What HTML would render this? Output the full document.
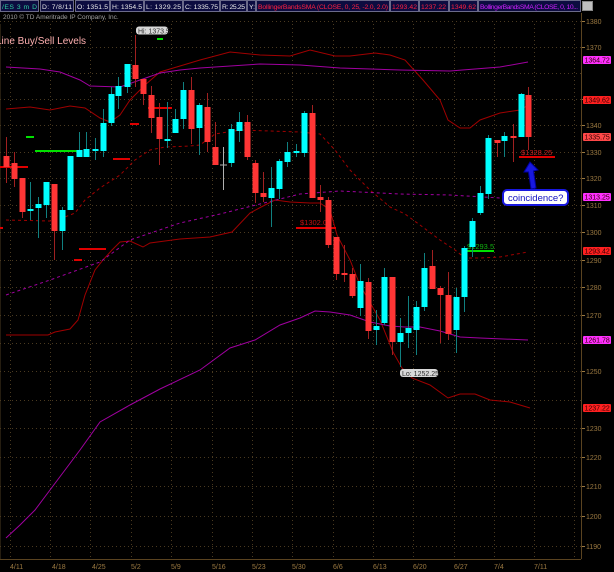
<!DOCTYPE html>
<html><head><meta charset="utf-8"><style>
html,body{margin:0;padding:0;background:#000;width:614px;height:572px;overflow:hidden}
svg{display:block}
text{font-family:"Liberation Sans",sans-serif}
#c rect{stroke:none}
</style></head><body>
<svg width="614" height="572" viewBox="0 0 614 572" xmlns="http://www.w3.org/2000/svg">
<rect width="614" height="572" fill="#000"/>
<!-- header -->
<g font-size="6.8" fill="#e8e8e8">
<rect x="0.5" y="0.5" width="38" height="11" fill="#0c0c40" stroke="#6a6a8a"/><text x="2" y="9" fill="#30d0a0" textLength="35">/ES 3 m D</text>
<rect x="40.5" y="0.5" width="33" height="11" fill="#0c0c40" stroke="#6a6a8a"/><text x="42" y="9" textLength="30">D: 7/8/11</text>
<rect x="75.5" y="0.5" width="34" height="11" fill="#0c0c40" stroke="#6a6a8a"/><text x="77" y="9" textLength="31">O: 1351.5</text>
<rect x="110.5" y="0.5" width="33" height="11" fill="#0c0c40" stroke="#6a6a8a"/><text x="112" y="9" textLength="30">H: 1354.5</text>
<rect x="144.5" y="0.5" width="38" height="11" fill="#0c0c40" stroke="#6a6a8a"/><text x="146" y="9" textLength="35">L: 1329.25</text>
<rect x="183.5" y="0.5" width="36" height="11" fill="#0c0c40" stroke="#6a6a8a"/><text x="185" y="9" textLength="33">C: 1335.75</text>
<rect x="220.5" y="0.5" width="26" height="11" fill="#0c0c40" stroke="#6a6a8a"/><text x="222" y="9" textLength="23">R: 25.25</text>
<rect x="247.5" y="0.5" width="8" height="11" fill="#0c0c40" stroke="#6a6a8a"/><text x="249" y="9">Y:</text>
<rect x="256.5" y="0.5" width="133" height="11" fill="#0c0c40" stroke="#6a6a8a"/><text x="258" y="9" fill="#ff2040" textLength="130">BollingerBandsSMA (CLOSE, 0, 25, -2.0, 2.0)</text>
<rect x="390.5" y="0.5" width="28" height="11" fill="#0c0c40" stroke="#6a6a8a"/><text x="392" y="9" fill="#ff2040" textLength="25">1293.42</text>
<rect x="419.5" y="0.5" width="29" height="11" fill="#0c0c40" stroke="#6a6a8a"/><text x="421" y="9" fill="#ff2040" textLength="25">1237.22</text>
<rect x="449.5" y="0.5" width="28" height="11" fill="#0c0c40" stroke="#6a6a8a"/><text x="451" y="9" fill="#ff2040" textLength="25">1349.62</text>
<rect x="478.5" y="0.5" width="102" height="11" fill="#0c0c40" stroke="#6a6a8a"/><text x="480" y="9" fill="#d020ff" textLength="98">BollingerBandsSMA (CLOSE, 0, 10...</text>
<rect x="582.5" y="1.5" width="10" height="9" fill="#c0c0c0" stroke="#888"/>
</g>
<text x="3" y="19" font-size="6.5" fill="#a0a0a0">2010 © TD Ameritrade IP Company, Inc.</text>
<!-- grid -->
<g stroke="#4a3a20" stroke-width="1" stroke-dasharray="1,3">
<path d="M0 21.5H581M0 47.5H581M0 73.5H581M0 99.5H581M0 125.5H581M0 152.5H581M0 178.5H581M0 205.5H581M0 232.5H581M0 260.5H581M0 287.5H581M0 315.5H581M0 343.5H581M0 371.5H581M0 400.5H581M0 428.5H581M0 457.5H581M0 486.5H581M0 516.5H581M0 546.5H581"/>
<path d="M10.5 24V558M50.5 24V558M90.5 24V558M131.5 24V558M171.5 24V558M212.5 24V558M252.5 24V558M292.5 24V558M333.5 24V558M373.5 24V558M413.5 24V558M454.5 24V558M494.5 24V558M534.5 24V558M574.5 24V558"/>
</g>
<path d="M581.5 13V559M0 559.5H581" stroke="#5a4320" stroke-width="1"/>
<path d="M0 24V559" stroke="#4a3a20"/>
<g font-size="7" fill="#9a7840">
<text x="586" y="24">1380</text><text x="586" y="50">1370</text><text x="586" y="102">1350</text><text x="586" y="128">1340</text><text x="586" y="155">1330</text><text x="586" y="181">1320</text><text x="586" y="208">1310</text><text x="586" y="235">1300</text><text x="586" y="263">1290</text><text x="586" y="290">1280</text><text x="586" y="318">1270</text><text x="586" y="374">1250</text><text x="586" y="431">1230</text><text x="586" y="460">1220</text><text x="586" y="489">1210</text><text x="586" y="519">1200</text><text x="586" y="549">1190</text>
<text x="10" y="569">4/11</text><text x="52" y="569">4/18</text><text x="92" y="569">4/25</text><text x="131" y="569">5/2</text><text x="171" y="569">5/9</text><text x="212" y="569">5/16</text><text x="252" y="569">5/23</text><text x="292" y="569">5/30</text><text x="333" y="569">6/6</text><text x="373" y="569">6/13</text><text x="413" y="569">6/20</text><text x="454" y="569">6/27</text><text x="494" y="569">7/4</text><text x="534" y="569">7/11</text>
</g>
<path d="M582 21.5h3M582 47.5h3M582 99.5h3M582 125.5h3M582 152.5h3M582 178.5h3M582 205.5h3M582 232.5h3M582 260.5h3M582 287.5h3M582 315.5h3M582 371.5h3M582 428.5h3M582 457.5h3M582 486.5h3M582 516.5h3M582 546.5h3" stroke="#9a7840"/>
<text x="-4" y="44" font-size="10" fill="#ffb0b0">Line Buy/Sell Levels</text>
<!-- indicator lines -->
<g fill="none" stroke-width="1">
<path stroke="#a00000" d="M6 109L30 107L50 110L70 106L85 108L100 118L110 122L120 115L130 100L145 85L160 72L180 66L200 60L230 52L260 55L290 56L310 50L335 56L350 56L375 53L390 55L405 60L423 80L440 100L448 120L460 128L470 128L480 120L500 113L520 110L530 104"/>
<path stroke="#a00000" d="M6 335L48 335L55 332L70 329L78 320L85 295L95 270L103 260L112 250L120 242L130 241L143 247L150 243L180 239L210 237L232 232L250 213L265 205L275 200L290 202L310 203L320 203L330 210L337 235L350 260L360 285L380 320L393 352L402 368L412 378L430 385L448 398L460 394L475 394L490 400L510 402L530 408"/>
<path stroke="#a00000" stroke-dasharray="3,3" d="M6 220L50 221L65 217L75 213L85 200L100 188L120 175L135 160L150 150L165 147L190 146L200 145L215 134L240 130L270 131L300 132L320 134L335 150L350 170L370 190L390 207L405 214L420 225L440 240L455 250L465 258L480 258L500 257L528 252"/>
<path stroke="#a000a0" d="M6 67L40 69L60 72L80 80L90 86L120 87L140 80L160 73L180 70L200 68L260 64L300 65L340 68L400 70L450 71L500 67L528 62"/>
<path stroke="#a000a0" d="M6 538L20 525L35 510L50 490L65 470L80 450L100 422L130 405L160 389L200 370L230 348L255 340L280 325L300 318L315 311L330 312L350 315L370 322L390 326L405 327L420 327L440 331L460 337L480 338L528 340"/>
<path stroke="#a000a0" stroke-dasharray="3,3" d="M6 295L50 280L100 262L130 240L180 223L220 214L260 204L300 194L340 191L400 194L450 195L500 198L520 196"/>
</g>
<!-- level lines -->
<g stroke-width="2">
<path stroke="#00e000" d="M26 137h8M35 151h45M157 39h6M462 251h32"/>
<path stroke="#e00000" d="M0 167h28M113 159h17M130 124h9M148 108h24M79 249h27M74 260h8M296 228h40M0 228h3M519 157h36"/>
</g>
<text x="300" y="225" font-size="7.5" fill="#c01010">$1302.03</text>
<text x="467" y="249" font-size="7.5" fill="#10b010">$1293.5</text>
<text x="521" y="155" font-size="7.5" fill="#d02020">$1328.25</text>
<!-- candles -->
<g id="c" stroke-width="1">
<g stroke="#a02020" fill="#ff3535">
<path d="M6.5 137V183M14.5 152V187M22.5 178V218M54.5 184V260M135.5 35V87M143.5 79V105M151.5 86V133M159.5 103V165M191.5 77V144M207.5 93V152M215.5 122V165M247.5 115V160M255.5 160V203M263.5 172V202M312.5 105V198M320.5 185V212M328.5 197V248M336.5 237V280M344.5 245V282M352.5 268V298M368.5 278V339M392.5 277V355M432.5 250V289M440.5 286V343M448.5 272V340M497.5 140V157M513.5 124V162M528.5 87V150"/>
<rect x="3.5" y="156" width="6" height="11"/><rect x="11.5" y="163" width="6" height="16"/><rect x="19.5" y="178" width="6" height="34"/><rect x="51.5" y="184" width="6" height="47"/><rect x="132.5" y="65" width="6" height="14"/><rect x="140.5" y="79" width="6" height="15"/><rect x="148.5" y="95" width="6" height="23"/><rect x="156.5" y="117" width="6" height="22"/><rect x="188.5" y="90" width="6" height="39"/><rect x="204.5" y="107" width="6" height="35"/><rect x="212.5" y="147" width="6" height="18"/><rect x="244.5" y="122" width="6" height="35"/><rect x="252.5" y="163" width="6" height="30"/><rect x="260.5" y="193" width="6" height="4"/><rect x="309.5" y="113" width="6" height="85"/><rect x="317.5" y="197" width="6" height="3"/><rect x="325.5" y="200" width="6" height="45"/><rect x="333.5" y="237" width="6" height="37"/><rect x="341.5" y="273" width="6" height="2"/><rect x="349.5" y="274" width="6" height="22"/><rect x="365.5" y="282" width="6" height="49"/><rect x="389.5" y="277" width="6" height="65"/><rect x="429.5" y="266" width="6" height="23"/><rect x="437.5" y="288" width="6" height="7"/><rect x="445.5" y="295" width="6" height="39"/><rect x="494.5" y="140" width="6" height="3"/><rect x="510.5" y="136" width="6" height="2"/><rect x="525.5" y="95" width="6" height="42"/>
</g>
<g stroke="#108080" fill="#00ffff">
<path d="M30.5 182V220M38.5 197V238M46.5 182V218M62.5 207V250M70.5 156V210M79.5 132V157M86.5 132V157M95.5 138V160M103.5 109V157M111.5 87V126M118.5 77V109M127.5 64V93M167.5 102V148M175.5 109V133M183.5 82V129M199.5 103V155M231.5 124V167M239.5 112V142M271.5 167V227M279.5 159V199M287.5 142V167M296.5 144V157M304.5 111V157M360.5 264V316M376.5 310V345M384.5 268V325M400.5 318V367M408.5 296V348M416.5 301V355M424.5 253V311M456.5 288V353M464.5 246V312M472.5 218V257M480.5 186V215M488.5 135V199M504.5 132V157M521.5 93V137"/>
<rect x="27.5" y="209" width="6" height="2"/><rect x="35.5" y="204" width="6" height="4"/><rect x="43.5" y="182" width="6" height="23"/><rect x="59.5" y="210" width="6" height="21"/><rect x="67.5" y="156" width="6" height="54"/><rect x="76.5" y="150" width="6" height="7"/><rect x="83.5" y="149" width="6" height="8"/><rect x="92.5" y="149" width="6" height="2"/><rect x="100.5" y="123" width="6" height="28"/><rect x="108.5" y="94" width="6" height="29"/><rect x="115.5" y="86" width="6" height="10"/><rect x="124.5" y="64" width="6" height="23"/><rect x="164.5" y="139" width="6" height="2"/><rect x="172.5" y="119" width="6" height="14"/><rect x="180.5" y="90" width="6" height="29"/><rect x="196.5" y="105" width="6" height="23"/><rect x="228.5" y="129" width="6" height="34"/><rect x="236.5" y="122" width="6" height="9"/><rect x="268.5" y="188" width="6" height="10"/><rect x="276.5" y="161" width="6" height="28"/><rect x="284.5" y="152" width="6" height="10"/><rect x="293.5" y="151" width="6" height="2"/><rect x="301.5" y="113" width="6" height="40"/><rect x="357.5" y="281" width="6" height="27"/><rect x="373.5" y="326" width="6" height="4"/><rect x="381.5" y="277" width="6" height="46"/><rect x="397.5" y="333" width="6" height="9"/><rect x="405.5" y="328" width="6" height="5"/><rect x="413.5" y="307" width="6" height="23"/><rect x="421.5" y="268" width="6" height="39"/><rect x="453.5" y="297" width="6" height="33"/><rect x="461.5" y="248" width="6" height="49"/><rect x="469.5" y="221" width="6" height="26"/><rect x="477.5" y="193" width="6" height="20"/><rect x="485.5" y="138" width="6" height="56"/><rect x="501.5" y="136" width="6" height="5"/><rect x="518.5" y="94" width="6" height="43"/>
</g>
<path d="M223.5 147V190M220 165h7" stroke="#b0b0b0"/>
</g>
<!-- hi/lo labels -->
<rect x="136" y="26.5" width="32" height="8" rx="3" fill="#d8d8d8"/>
<text x="138" y="33.3" font-size="7" fill="#303030">Hi: 1373.5</text>
<rect x="400" y="369" width="38" height="8" rx="3" fill="#d8d8d8"/>
<text x="402" y="375.8" font-size="7" fill="#303030">Lo: 1252.25</text>
<!-- callout -->
<path d="M530 162L524 172L528.5 172L531 189L536 188L533.5 171L538 170Z" fill="#1818e0" stroke="#0000a0"/>
<rect x="503" y="190" width="65" height="15" rx="4" fill="#fff" stroke="#1818e0" stroke-width="2"/>
<text x="508" y="201" font-size="9.5" fill="#1010c0">coincidence?</text>
<!-- right labels -->
<g font-size="7" fill="#300000">
<rect x="583" y="56" width="28" height="8" rx="1" fill="#ff30ff"/><text x="584.5" y="62.5">1364.72</text>
<rect x="583" y="96" width="28" height="8" rx="1" fill="#ff2020"/><text x="584.5" y="102.5">1349.62</text>
<rect x="583" y="133" width="28" height="8" rx="1" fill="#ff4848"/><text x="584.5" y="139.5">1335.75</text>
<rect x="583" y="193" width="28" height="8" rx="1" fill="#ff30ff"/><text x="584.5" y="199.5">1313.25</text>
<rect x="583" y="247" width="28" height="8" rx="1" fill="#ff2020"/><text x="584.5" y="253.5">1293.42</text>
<rect x="583" y="336" width="28" height="8" rx="1" fill="#ff30ff"/><text x="584.5" y="342.5">1261.78</text>
<rect x="583" y="404" width="28" height="8" rx="1" fill="#ff2020"/><text x="584.5" y="410.5">1237.22</text>
</g>
</svg>
</body></html>
